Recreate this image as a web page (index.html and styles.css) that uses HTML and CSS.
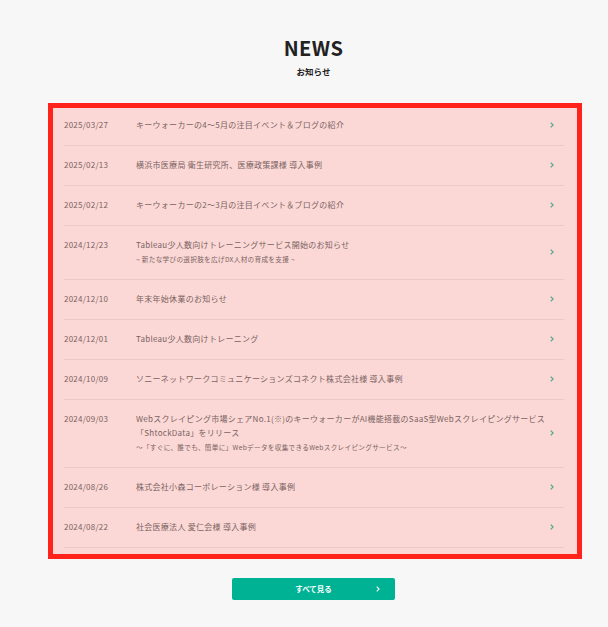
FILE: index.html
```html
<!DOCTYPE html>
<html lang="en">
<head>
  <meta charset="UTF-8">
  <title>NEWS</title>
  <link rel="stylesheet" href="styles.css">
</head>
<body>

  <div class="page">
    <div class="header">
      <h2>NEWS</h2>
      <p>お知らせ</p>
    </div>

    <div class="news-box">
      <ul class="news-list">
        <li class="news-item">
          <span class="date">2025/03/27</span>
          <div class="body"><p class="title">キーウォーカーの4〜5月の注目イベント＆ブログの紹介</p></div>
          <svg class="arrow" viewBox="0 0 4 6"><path d="M.7.6 3.1 3 .7 5.4"/></svg>
        </li>
        <li class="news-item">
          <span class="date">2025/02/13</span>
          <div class="body"><p class="title">横浜市医療局 衛生研究所、医療政策課様 導入事例</p></div>
          <svg class="arrow" viewBox="0 0 4 6"><path d="M.7.6 3.1 3 .7 5.4"/></svg>
        </li>
        <li class="news-item">
          <span class="date">2025/02/12</span>
          <div class="body"><p class="title">キーウォーカーの2〜3月の注目イベント＆ブログの紹介</p></div>
          <svg class="arrow" viewBox="0 0 4 6"><path d="M.7.6 3.1 3 .7 5.4"/></svg>
        </li>
        <li class="news-item">
          <span class="date">2024/12/23</span>
          <div class="body">
            <p class="title">Tableau少人数向けトレーニングサービス開始のお知らせ</p>
            <p class="sub">~ 新たな学びの選択肢を広げDX人材の育成を支援 ~</p>
          </div>
          <svg class="arrow" viewBox="0 0 4 6"><path d="M.7.6 3.1 3 .7 5.4"/></svg>
        </li>
        <li class="news-item">
          <span class="date">2024/12/10</span>
          <div class="body"><p class="title">年末年始休業のお知らせ</p></div>
          <svg class="arrow" viewBox="0 0 4 6"><path d="M.7.6 3.1 3 .7 5.4"/></svg>
        </li>
        <li class="news-item">
          <span class="date">2024/12/01</span>
          <div class="body"><p class="title">Tableau少人数向けトレーニング</p></div>
          <svg class="arrow" viewBox="0 0 4 6"><path d="M.7.6 3.1 3 .7 5.4"/></svg>
        </li>
        <li class="news-item">
          <span class="date">2024/10/09</span>
          <div class="body"><p class="title">ソニーネットワークコミュニケーションズコネクト株式会社様 導入事例</p></div>
          <svg class="arrow" viewBox="0 0 4 6"><path d="M.7.6 3.1 3 .7 5.4"/></svg>
        </li>
        <li class="news-item">
          <span class="date">2024/09/03</span>
          <div class="body">
            <p class="title">Webスクレイピング市場シェアNo.1(※)のキーウォーカーがAI機能搭載のSaaS型Webスクレイピングサービス「ShtockData」をリリース</p>
            <p class="sub">〜「すぐに、誰でも、簡単に」Webデータを収集できるWebスクレイピングサービス〜</p>
          </div>
          <svg class="arrow" viewBox="0 0 4 6"><path d="M.7.6 3.1 3 .7 5.4"/></svg>
        </li>
        <li class="news-item">
          <span class="date">2024/08/26</span>
          <div class="body"><p class="title">株式会社小森コーポレーション様 導入事例</p></div>
          <svg class="arrow" viewBox="0 0 4 6"><path d="M.7.6 3.1 3 .7 5.4"/></svg>
        </li>
        <li class="news-item">
          <span class="date">2024/08/22</span>
          <div class="body"><p class="title">社会医療法人 愛仁会様 導入事例</p></div>
          <svg class="arrow" viewBox="0 0 4 6"><path d="M.7.6 3.1 3 .7 5.4"/></svg>
        </li>
      </ul>
    </div>

    <div class="more">
      <a class="more-btn" href="#">
        <span>すべて見る</span>
        <svg class="more-arrow" viewBox="0 0 4 6"><path d="M.7.6 3.1 3 .7 5.4"/></svg>
      </a>
    </div>
  </div>

</body>
</html>
```

FILE: styles.css
```css
body {
  font-family: "Noto Sans CJK JP", "Noto Sans", sans-serif;
  margin: 0;
  padding: 0;
  background-color: #f7f7f7;
}
p {
  margin: 0;
}
.page {
  width: 534px;
  margin-left: 48px;
  padding-top: 34px;
}
.header {
  text-align: center;
  padding-right: 3px;
  color: #222;
}
.header h2 {
  margin: 0;
  font-size: 20px;
  line-height: 27px;
  font-weight: 700;
  letter-spacing: 0.02em;
}
.header p {
  margin-top: 3px;
  font-size: 8.5px;
  line-height: 14px;
  font-weight: 700;
}
.news-box {
  margin-top: 25px;
  height: 456px;
  box-sizing: border-box;
  border: 5px solid #ff231c;
  background-color: #fbd8d5;
  padding: 0 13px 0 11px;
}
.news-list {
  list-style: none;
  margin: -2px 0 0;
  padding: 0;
}
.news-item {
  display: flex;
  align-items: center;
  border-bottom: 1px solid #edc8c6;
  color: #7a6262;
  font-size: 8px;
  line-height: 14px;
}
.date {
  width: 72px;
  flex: none;
  letter-spacing: 0.03em;
  align-self: flex-start;
  padding-top: 12px;
}
.body {
  flex: 1;
  padding: 12px 0 13px;
}
.title {
  letter-spacing: 0.035em;
}
.sub {
  font-size: 6.6px;
  letter-spacing: 0.05em;
}
.arrow {
  width: 4px;
  height: 6px;
  flex: none;
  margin: 0 10px 1px 0;
  fill: none;
  stroke: #4fa98c;
  stroke-width: 1.2;
}
.more {
  display: flex;
  justify-content: center;
  padding: 19px 3px 0 0;
}
.more-btn {
  position: relative;
  display: block;
  width: 163px;
  height: 22px;
  border-radius: 2px;
  background-color: #00b294;
  color: #fff;
  font-size: 7.5px;
  font-weight: 700;
  line-height: 22px;
  text-align: center;
  text-decoration: none;
}
.more-arrow {
  position: absolute;
  right: 15px;
  top: 8px;
  width: 4px;
  height: 6px;
  fill: none;
  stroke: #fff;
  stroke-width: 1.1;
}
```
